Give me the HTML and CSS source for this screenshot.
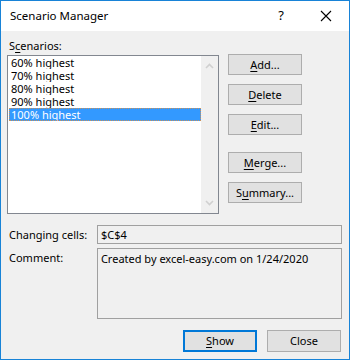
FILE: index.html
```html
<!DOCTYPE html>
<html lang="en">

<head>
  <meta charset="UTF-8">
  <meta name="viewport" content="width=device-width, initial-scale=1.0">
  <title>Scenario Manager</title>
  <link rel="stylesheet" href="styles.css">
</head>

<body>
  <div class="dialog">
    <div class="titlebar">
      <span class="title">Scenario Manager</span>
      <span class="help">?</span>
      <svg class="close" width="12" height="12" viewBox="0 0 12 12">
        <path d="M1 1 L11 11 M11 1 L1 11" stroke="#000" stroke-width="1.1" fill="none" />
      </svg>
    </div>

    <div class="content">
      <div class="label">S<u>c</u>enarios:</div>
      <div class="main-row">
        <div class="listbox">
          <div class="items">
            <div class="item">60% highest</div>
            <div class="item">70% highest</div>
            <div class="item">80% highest</div>
            <div class="item">90% highest</div>
            <div class="item selected">100% highest</div>
          </div>
          <div class="scrollbar">
            <svg width="9" height="6" viewBox="0 0 9 6">
              <path d="M1 5 L4.5 1.5 L8 5" stroke="#d0d0d0" stroke-width="1.6" fill="none" />
            </svg>
            <svg width="9" height="6" viewBox="0 0 9 6">
              <path d="M1 1 L4.5 4.5 L8 1" stroke="#d0d0d0" stroke-width="1.6" fill="none" />
            </svg>
          </div>
        </div>
        <div class="side-buttons">
          <button class="btn"><u>A</u>dd...</button>
          <button class="btn"><u>D</u>elete</button>
          <button class="btn"><u>E</u>dit...</button>
          <button class="btn spaced"><u>M</u>erge...</button>
          <button class="btn">S<u>u</u>mmary...</button>
        </div>
      </div>

      <div class="field-row first">
        <span class="field-label">Changing cells:</span>
        <div class="field cells">$C$4</div>
      </div>
      <div class="field-row">
        <span class="field-label">Comment:</span>
        <div class="field comment">Created by excel-easy.com on 1/24/2020</div>
      </div>

      <div class="footer">
        <button class="btn default"><u>S</u>how</button>
        <button class="btn">Close</button>
      </div>
    </div>
  </div>
</body>

</html>
```

FILE: styles.css
```css
body {
  margin: 0;
  font-family: "Noto Sans", "Open Sans", sans-serif;
  font-size: 11px;
  color: #000;
}

.dialog {
  width: 350px;
  height: 360px;
  box-sizing: border-box;
  border: 1px solid #1883d7;
  background: #f0f0f0;
  display: flex;
  flex-direction: column;
}

.titlebar {
  height: 30px;
  background: #fff;
  display: flex;
  align-items: center;
  padding-left: 9px;
  font-size: 11.5px;
}

.title {
  flex: 1;
  line-height: 15px;
  margin-top: -1px;
}

.help {
  font-size: 13px;
  margin-right: 36px;
  margin-top: -2px;
}

.close {
  margin-right: 17px;
  margin-top: -1px;
}

.content {
  padding: 7px 7px 0 6px;
  display: flex;
  flex-direction: column;
}

.label {
  line-height: 15px;
  padding-left: 2px;
  margin-bottom: 2px;
}

u {
  text-decoration-thickness: 1px;
  text-underline-offset: 2px;
}

.main-row {
  display: flex;
  gap: 9px;
}

.listbox {
  width: 212px;
  height: 159px;
  box-sizing: border-box;
  border: 1px solid #828790;
  background: #fff;
  display: flex;
}

.items {
  flex: 1;
  padding-left: 1px;
}

.item {
  height: 13px;
  line-height: 13px;
  padding-left: 2px;
  white-space: nowrap;
  overflow: hidden;
}

.item.selected {
  background: #3399ff;
  color: #fff;
  outline: 1px dotted #c9915a;
  outline-offset: -1px;
}

.scrollbar {
  width: 17px;
  background: #f0f0f0;
  display: flex;
  flex-direction: column;
  justify-content: space-between;
  align-items: center;
  padding: 7px 0 7px;
  box-sizing: border-box;
}

.side-buttons {
  display: flex;
  flex-direction: column;
  gap: 9px;
  margin-top: -1px;
}

.btn {
  width: 74px;
  height: 21px;
  box-sizing: border-box;
  background: #e1e1e1;
  border: 1px solid #adadad;
  font-family: inherit;
  font-size: 11px;
  color: #000;
  padding: 0;
  line-height: 18px;
}

.btn.spaced {
  margin-top: 8px;
}

.field-row {
  display: flex;
  align-items: flex-start;
  margin-top: 4px;
}

.field-row.first {
  margin-top: 11px;
}

.field-label {
  width: 89px;
  padding-left: 2px;
  line-height: 19px;
}

.field {
  width: 248px;
  box-sizing: border-box;
  border: 1px solid #a0a0a0;
  padding-left: 3px;
  line-height: 17px;
}

.cells {
  height: 19px;
}

.comment {
  height: 71px;
  padding-top: 1px;
}

.footer {
  display: flex;
  justify-content: flex-end;
  gap: 10px;
  margin-top: 11px;
  padding-right: 1px;
}

.footer .btn {
  height: 22px;
}

.btn.default {
  border: 2px solid #0078d7;
}
```
